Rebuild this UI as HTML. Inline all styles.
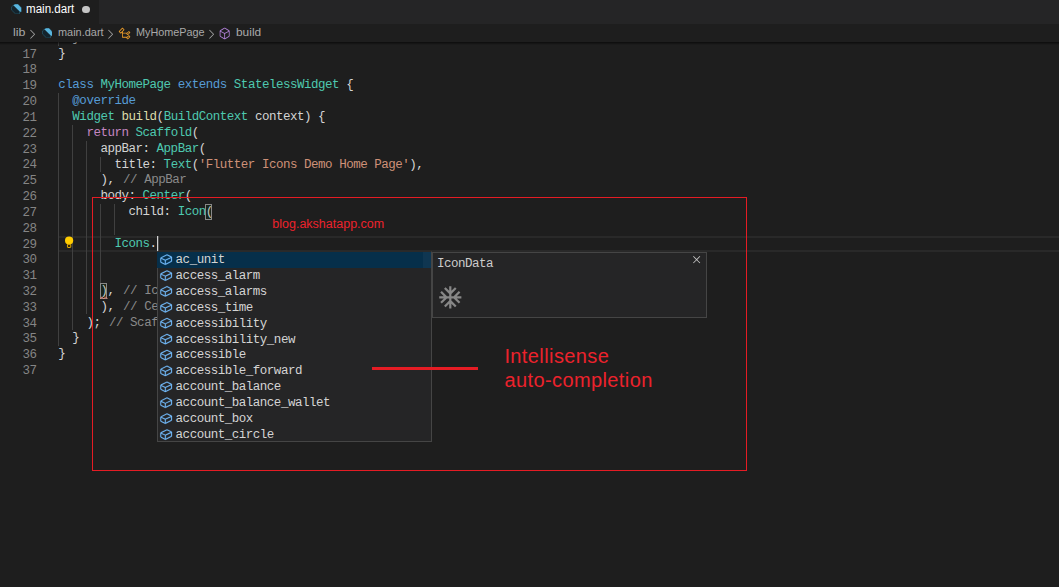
<!DOCTYPE html>
<html><head><meta charset="utf-8"><title>main.dart</title>
<style>
html,body{margin:0;padding:0;background:#1e1e1e;}
body{width:1059px;height:587px;position:relative;overflow:hidden;font-family:"Liberation Sans",sans-serif;}
.abs{position:absolute;}
.tabbar{left:0;top:0;width:1059px;height:24px;background:#252526;}
.tab{left:0;top:0;width:98.5px;height:24px;background:#1e1e1e;}
.ui{position:absolute;white-space:pre;font-family:"Liberation Sans",sans-serif;}
.mono{font-family:"Liberation Mono",monospace;font-size:12.5px;letter-spacing:-0.4813px;line-height:15.8px;white-space:pre;}
.ln{position:absolute;left:0;width:36.6px;text-align:right;color:#858585;height:15.8px;}
.cl{position:absolute;left:58.3px;height:15.8px;color:#d4d4d4;}
.k{color:#569cd6}.t{color:#4ec9b0}.f{color:#dcdcaa}.s{color:#ce9178}.c{color:#8a8a8a;margin-left:1.6px}.r{color:#c586c0}.p{color:#d4d4d4}
.g{position:absolute;width:1px;background:#404040;}
.st{position:absolute;left:17.6px;color:#d4d4d4;height:15.8px}
.red{color:#ec222c;}
</style></head><body>

<div class="abs tabbar"></div><div class="abs tab"></div>
<svg class="abs" style="left:11.0px;top:3.7px" width="10.6" height="10.2" viewBox="0 0 10 10"><path d="M2.1 1.3 L4 0.2 L6.6 0.2 L9.8 3.6 L9.8 7.7 L8.1 7.7 L8.1 9.8 L4.3 9.8 L0.2 5.8 L0.2 2.9 Z" fill="#13232c" stroke="#2c7188" stroke-width="0.5"/><path d="M2.1 1.3 L4 0.2 L6.6 0.2 L9.8 3.6 L9.8 7.7 L8.6 7.7 Z" fill="#59b5de"/></svg>
<div class="ui" style="left:26.28px;top:2.00px;font-size:12px;line-height:14px;color:#ffffff;transform:scaleX(0.9644);transform-origin:0 0">main.dart</div>
<div class="abs" style="left:82.3px;top:5.6px;width:7.4px;height:7.4px;border-radius:50%;background:#c5c5c5"></div>
<div class="ui" style="left:13.04px;top:25.30px;font-size:11.6px;line-height:14px;color:#a9a9a9;transform:scaleX(1.0699);transform-origin:0 0">lib</div>
<svg class="abs" style="left:24.66px;top:26.7px" width="14.4" height="14.4" viewBox="0 0 16 16"><path fill="#a9a9a9" d="M10.072 8.024L5.715 3.667l.618-.62L11 7.716v.618L6.333 13l-.618-.619 4.357-4.357z"/></svg>
<svg class="abs" style="left:41.7px;top:27.9px" width="10.6" height="10.2" viewBox="0 0 10 10"><path d="M2.1 1.3 L4 0.2 L6.6 0.2 L9.8 3.6 L9.8 7.7 L8.1 7.7 L8.1 9.8 L4.3 9.8 L0.2 5.8 L0.2 2.9 Z" fill="#13232c" stroke="#2c7188" stroke-width="0.5"/><path d="M2.1 1.3 L4 0.2 L6.6 0.2 L9.8 3.6 L9.8 7.7 L8.6 7.7 Z" fill="#59b5de"/></svg>
<div class="ui" style="left:57.51px;top:25.30px;font-size:11.6px;line-height:14px;color:#a9a9a9;transform:scaleX(0.9427);transform-origin:0 0">main.dart</div>
<svg class="abs" style="left:103.36px;top:26.7px" width="14.4" height="14.4" viewBox="0 0 16 16"><path fill="#a9a9a9" d="M10.072 8.024L5.715 3.667l.618-.62L11 7.716v.618L6.333 13l-.618-.619 4.357-4.357z"/></svg>
<svg class="abs" style="left:117.7px;top:27.1px" width="13.3" height="13.3" viewBox="0 0 16 16"><path fill="#ee9d28" d="M11.34 9.71h.71l2.67-2.67v-.71L13.38 5h-.7l-1.82 1.81h-5V5.56l1.86-1.85V3l-2-2H5L1 5v.71l2 2h.71l1.14-1.15v5.79l.5.5H10v.52l1.33 1.34h.71l2.67-2.67v-.71L13.37 10h-.7l-1.86 1.85h-5v-4H10v.48l1.34 1.38zm1.69-3.65l.63.63-2 2-.63-.63 2-2zm0 5l.63.63-2 2-.63-.63 2-2zM3.35 6.65l-1.29-1.3 3.29-3.29 1.3 1.29-3.3 3.3z"/></svg>
<div class="ui" style="left:135.91px;top:25.30px;font-size:11.6px;line-height:14px;color:#a9a9a9;transform:scaleX(0.9330);transform-origin:0 0">MyHomePage</div>
<svg class="abs" style="left:203.56px;top:26.7px" width="14.4" height="14.4" viewBox="0 0 16 16"><path fill="#a9a9a9" d="M10.072 8.024L5.715 3.667l.618-.62L11 7.716v.618L6.333 13l-.618-.619 4.357-4.357z"/></svg>
<svg class="abs" style="left:217.5px;top:26.9px" width="13.3" height="13.3" viewBox="0 0 16 16"><path fill="#b180d7" d="M13.51 4l-5-3h-1l-5 3-.49.86v6l.49.85 5 3h1l5-3 .49-.85v-6L13.51 4zm-6 9.56l-4.5-2.7V5.7l4.5 2.45v5.41zM3.27 4.7l4.74-2.84 4.74 2.84-4.74 2.59L3.27 4.7zm9.74 6.16l-4.5 2.7V8.15l4.5-2.45v5.16z"/></svg>
<div class="ui" style="left:235.66px;top:25.30px;font-size:11.6px;line-height:14px;color:#a9a9a9;transform:scaleX(1.0271);transform-origin:0 0">build</div>
<div class="abs mono" style="left:0;top:42px;width:1059px;height:545px;overflow:hidden">
<div class="abs" style="left:59px;top:194.20px;width:1000px;height:15.80px;box-sizing:border-box;border-top:2px solid #292929;border-bottom:2px solid #292929"></div>
<div class="g" style="left:58.00px;top:51.30px;height:252.80px"></div>
<div class="g" style="left:72.00px;top:82.90px;height:205.40px"></div>
<div class="g" style="left:86.00px;top:98.70px;height:173.80px"></div>
<div class="g" style="left:100.00px;top:114.50px;height:15.80px"></div>
<div class="g" style="left:100.00px;top:161.90px;height:79.00px"></div>
<div class="g" style="left:114.00px;top:161.90px;height:31.60px"></div>
<div class="g" style="left:58.00px;top:-11.90px;height:15.80px"></div>
<div class="cl" style="top:-11.00px">  }</div>
<div class="ln" style="top:6.00px;color:#858585">17</div>
<div class="cl" style="top:5.00px">}</div>
<div class="ln" style="top:21.00px;color:#858585">18</div>
<div class="ln" style="top:37.00px;color:#858585">19</div>
<div class="cl" style="top:36.00px"><span class="k">class</span> <span class="t">MyHomePage</span> <span class="k">extends</span> <span class="t">StatelessWidget</span> {</div>
<div class="ln" style="top:53.00px;color:#858585">20</div>
<div class="cl" style="top:52.00px">  <span class="k">@override</span></div>
<div class="ln" style="top:69.00px;color:#858585">21</div>
<div class="cl" style="top:68.00px">  <span class="t">Widget</span> <span class="f">build</span>(<span class="t">BuildContext</span> context) {</div>
<div class="ln" style="top:85.00px;color:#858585">22</div>
<div class="cl" style="top:84.00px">    <span class="r">return</span> <span class="t">Scaffold</span>(</div>
<div class="ln" style="top:101.00px;color:#858585">23</div>
<div class="cl" style="top:100.00px">      appBar: <span class="t">AppBar</span>(</div>
<div class="ln" style="top:116.00px;color:#858585">24</div>
<div class="cl" style="top:116.00px">        title: <span class="t">Text</span>(<span class="s">'Flutter Icons Demo Home Page'</span>),</div>
<div class="ln" style="top:132.00px;color:#858585">25</div>
<div class="cl" style="top:131.00px">      ), <span class="c">// AppBar</span></div>
<div class="ln" style="top:148.00px;color:#858585">26</div>
<div class="cl" style="top:147.00px">      body: <span class="t">Center</span>(</div>
<div class="ln" style="top:164.00px;color:#858585">27</div>
<div class="cl" style="top:163.00px">          child: <span class="t">Icon</span>(</div>
<div class="ln" style="top:180.00px;color:#858585">28</div>
<div class="ln" style="top:196.00px;color:#858585">29</div>
<div class="cl" style="top:195.00px">        <span class="t">Icons</span>.</div>
<div class="ln" style="top:211.00px;color:#858585">30</div>
<div class="ln" style="top:227.00px;color:#858585">31</div>
<div class="ln" style="top:243.00px;color:#858585">32</div>
<div class="cl" style="top:242.00px">      ), <span class="c">// Icon</span></div>
<div class="ln" style="top:259.00px;color:#858585">33</div>
<div class="cl" style="top:258.00px">      ), <span class="c">// Center</span></div>
<div class="ln" style="top:275.00px;color:#858585">34</div>
<div class="cl" style="top:274.00px">    ); <span class="c">// Scaffold</span></div>
<div class="ln" style="top:290.00px;color:#858585">35</div>
<div class="cl" style="top:289.00px">  }</div>
<div class="ln" style="top:306.00px;color:#858585">36</div>
<div class="cl" style="top:305.00px">}</div>
<div class="ln" style="top:322.00px;color:#858585">37</div>
<div class="abs" style="left:205.42px;top:162.00px;width:7.02px;height:16.40px;box-sizing:border-box;border:1px solid #888;background:rgba(0,100,0,0.1)"></div>
<div class="abs" style="left:100.12px;top:241.00px;width:7.02px;height:16.40px;box-sizing:border-box;border:1px solid #888;background:rgba(0,100,0,0.1)"></div>
<svg class="abs" style="left:100.02px;top:254.20px" width="8" height="4" viewBox="0 0 8 4"><path d="M0.3 3 L2 0.8 L3.8 3 L5.6 0.8 L7.4 3" fill="none" stroke="#f48771" stroke-width="0.9"/></svg>
<div class="abs" style="left:157px;top:194.00px;width:1px;height:15.80px;background:#d0d0d0"></div><div class="abs" style="left:158px;top:194.00px;width:1px;height:15.80px;background:rgba(208,208,208,0.25)"></div>
<svg class="abs" style="left:64px;top:193.80px" width="10" height="13" viewBox="0 0 10 13"><circle cx="5.1" cy="4.6" r="4.1" fill="#ffcc00"/><path d="M3.3 7.6 H6.9 V8.6 H3.3 Z" fill="#ffcc00"/><rect x="3.45" y="8.3" width="3.3" height="3.2" rx="0.4" fill="#3a2a00" stroke="#e8b000" stroke-width="0.95"/></svg>
</div>
<div class="abs" style="left:0;top:41.5px;width:1059px;height:3.5px;background:linear-gradient(rgba(0,0,0,0.6),rgba(0,0,0,0))"></div>
<div class="abs mono" style="left:157px;top:251px;width:275px;height:191px;box-sizing:border-box;border:1px solid #454545;border-top-color:#2a2a2a;background:#252526;overflow:hidden">
<div class="abs" style="left:-1px;top:0;width:274px;height:15.8px;background:#062f4a"></div>
<div class="abs" style="left:264.5px;top:0;width:8.5px;height:16px;background:rgba(140,160,180,0.07)"></div>
<span class="st" style="top:1px">ac_unit</span>
<span class="st" style="top:17px">access_alarm</span>
<span class="st" style="top:33px">access_alarms</span>
<span class="st" style="top:49px">access_time</span>
<span class="st" style="top:65px">accessibility</span>
<span class="st" style="top:81px">accessibility_new</span>
<span class="st" style="top:96px">accessible</span>
<span class="st" style="top:112px">accessible_forward</span>
<span class="st" style="top:128px">account_balance</span>
<span class="st" style="top:144px">account_balance_wallet</span>
<span class="st" style="top:160px">account_box</span>
<span class="st" style="top:176px">account_circle</span>
<svg class="abs" style="left:0;top:0" width="20" height="189" viewBox="0 0 20 189"><defs><path id="cb" fill="#75beff" stroke="#75beff" stroke-width="0.3" d="M14.45 4.5l-5-2.5h-.9l-7 3.5-.55.89v4.5l.55.9 5 2.5h.9l7-3.5.55-.9v-4.5l-.55-.89zm-8 8.64l-4.5-2.25V7.17l4.5 2v3.97zm.5-4.8L2.29 6.23l6.66-3.34 4.67 2.34-6.67 3.11zm7 1.55l-6.5 3.25V9.21l6.5-3v3.68z"/></defs><use href="#cb" transform="translate(1.53 0.84) scale(0.832)"/><use href="#cb" transform="translate(1.53 16.74) scale(0.832)"/><use href="#cb" transform="translate(1.53 32.64) scale(0.832)"/><use href="#cb" transform="translate(1.53 48.54) scale(0.832)"/><use href="#cb" transform="translate(1.53 64.44) scale(0.832)"/><use href="#cb" transform="translate(1.53 80.34) scale(0.832)"/><use href="#cb" transform="translate(1.53 96.24) scale(0.832)"/><use href="#cb" transform="translate(1.53 112.14) scale(0.832)"/><use href="#cb" transform="translate(1.53 128.04) scale(0.832)"/><use href="#cb" transform="translate(1.53 143.94) scale(0.832)"/><use href="#cb" transform="translate(1.53 159.84) scale(0.832)"/><use href="#cb" transform="translate(1.53 175.74) scale(0.832)"/></svg>
</div>
<div class="abs" style="left:157px;top:252px;width:2px;height:15.8px;background:#062f4a"></div>
<div class="abs" style="left:432px;top:252px;width:275px;height:66px;box-sizing:border-box;border:1px solid #454545;background:#252526"></div>
<div class="abs mono" style="left:436.9px;top:257px;height:15.8px;color:#cccccc">IconData</div>
<svg class="abs" style="left:689.6px;top:252.5px" width="13.3" height="13.3" viewBox="0 0 16 16"><path fill="#c5c5c5" d="M8 8.707l3.646 3.647.708-.707L8.707 8l3.647-3.646-.707-.708L8 7.293 4.354 3.646l-.707.708L7.293 8l-3.646 3.646.707.708L8 8.707z"/></svg>
<svg class="abs" style="left:436.7px;top:284.35px" width="26.6" height="26.6" viewBox="0 0 24 24"><path fill="#878787" d="M22 11h-4.17l3.24-3.24-1.41-1.42L15 11h-2V9l4.66-4.66-1.42-1.41L13 6.17V2h-2v4.17L7.76 2.93 6.34 4.34 11 9v2H9L4.34 6.34 2.93 7.76 6.17 11H2v2h4.17l-3.24 3.24 1.41 1.42L9 13h2v2l-4.66 4.66 1.42 1.41L11 17.83V22h2v-4.17l3.24 3.24 1.42-1.41L13 15v-2h2l4.66 4.66 1.41-1.42L17.83 13H22z"/></svg>
<div class="abs" style="left:92px;top:197px;width:655px;height:274px;box-sizing:border-box;border:1.2px solid #e51c24"></div>
<div class="ui red" style="left:272.3px;top:217.2px;font-size:12.5px;line-height:14px">blog.akshatapp.com</div>
<div class="abs" style="left:372px;top:366.6px;width:106px;height:3.4px;background:#e51c24"></div>
<div class="ui red" style="left:504.4px;top:344.7px;font-size:20px;letter-spacing:0.4px;line-height:23.6px">Intellisense</div>
<div class="ui red" style="left:504.4px;top:368.7px;font-size:20px;letter-spacing:0.4px;line-height:23.6px">auto-completion</div>
</body></html>
